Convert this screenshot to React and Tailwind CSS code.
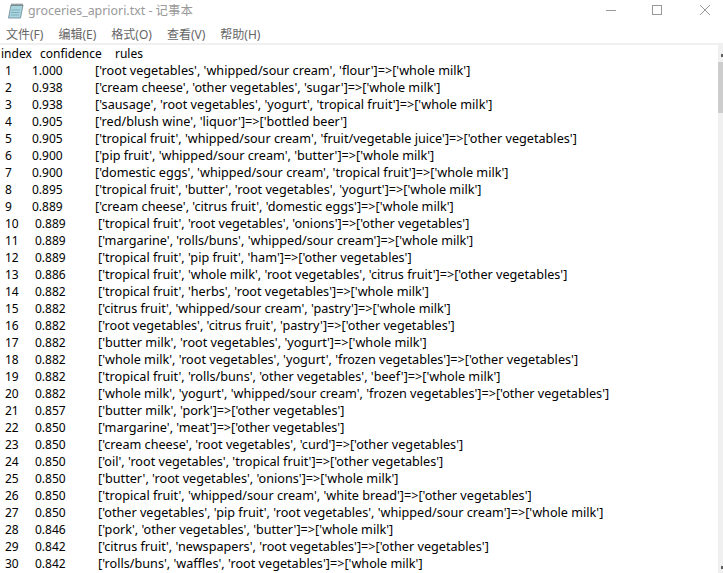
const rows = [
["1","1.000","['root vegetables', 'whipped/sour cream', 'flour']=>['whole milk']"],
["2","0.938","['cream cheese', 'other vegetables', 'sugar']=>['whole milk']"],
["3","0.938","['sausage', 'root vegetables', 'yogurt', 'tropical fruit']=>['whole milk']"],
["4","0.905","['red/blush wine', 'liquor']=>['bottled beer']"],
["5","0.905","['tropical fruit', 'whipped/sour cream', 'fruit/vegetable juice']=>['other vegetables']"],
["6","0.900","['pip fruit', 'whipped/sour cream', 'butter']=>['whole milk']"],
["7","0.900","['domestic eggs', 'whipped/sour cream', 'tropical fruit']=>['whole milk']"],
["8","0.895","['tropical fruit', 'butter', 'root vegetables', 'yogurt']=>['whole milk']"],
["9","0.889","['cream cheese', 'citrus fruit', 'domestic eggs']=>['whole milk']"],
["10","0.889","['tropical fruit', 'root vegetables', 'onions']=>['other vegetables']"],
["11","0.889","['margarine', 'rolls/buns', 'whipped/sour cream']=>['whole milk']"],
["12","0.889","['tropical fruit', 'pip fruit', 'ham']=>['other vegetables']"],
["13","0.886","['tropical fruit', 'whole milk', 'root vegetables', 'citrus fruit']=>['other vegetables']"],
["14","0.882","['tropical fruit', 'herbs', 'root vegetables']=>['whole milk']"],
["15","0.882","['citrus fruit', 'whipped/sour cream', 'pastry']=>['whole milk']"],
["16","0.882","['root vegetables', 'citrus fruit', 'pastry']=>['other vegetables']"],
["17","0.882","['butter milk', 'root vegetables', 'yogurt']=>['whole milk']"],
["18","0.882","['whole milk', 'root vegetables', 'yogurt', 'frozen vegetables']=>['other vegetables']"],
["19","0.882","['tropical fruit', 'rolls/buns', 'other vegetables', 'beef']=>['whole milk']"],
["20","0.882","['whole milk', 'yogurt', 'whipped/sour cream', 'frozen vegetables']=>['other vegetables']"],
["21","0.857","['butter milk', 'pork']=>['other vegetables']"],
["22","0.850","['margarine', 'meat']=>['other vegetables']"],
["23","0.850","['cream cheese', 'root vegetables', 'curd']=>['other vegetables']"],
["24","0.850","['oil', 'root vegetables', 'tropical fruit']=>['other vegetables']"],
["25","0.850","['butter', 'root vegetables', 'onions']=>['whole milk']"],
["26","0.850","['tropical fruit', 'whipped/sour cream', 'white bread']=>['other vegetables']"],
["27","0.850","['other vegetables', 'pip fruit', 'root vegetables', 'whipped/sour cream']=>['whole milk']"],
["28","0.846","['pork', 'other vegetables', 'butter']=>['whole milk']"],
["29","0.842","['citrus fruit', 'newspapers', 'root vegetables']=>['other vegetables']"],
["30","0.842","['rolls/buns', 'waffles', 'root vegetables']=>['whole milk']"],
];
const font = "font-['Noto_Sans','Noto_Sans_CJK_SC',sans-serif]";
const menu = ["文件(F)","编辑(E)","格式(O)","查看(V)","帮助(H)"];
export default function App() {
  return (
    <div className={`w-[723px] h-[573px] bg-white overflow-hidden flex flex-col ${font}`}>
      <div className="h-[20px] flex items-center shrink-0 pt-[2px]">
        <svg width="17" height="17" viewBox="0 0 17 17" className="ml-[7px] -mt-[2px]">
          <path d="M4 3 L16 3 L13.500 16 L1.500 16 Z" fill="#a9d3dd" stroke="#7d9aa5" />
          <path d="M4.500 8 L13 8 M4 10.500 L12.500 10.500 M3.500 13 L12 13" stroke="#7fb0bd" />
          <path d="M5 1.500V4M7 1.500V4M9 1.500V4M11 1.500V4M13 1.500V4M15 1.500V4" stroke="#555" strokeWidth="0.800" />
        </svg>
        <span className="ml-[4px] text-[12.4px] text-[#999999]">groceries_apriori.txt - 记事本</span>
        <div className="ml-auto flex items-center -mt-[2px]">
          <svg width="12" height="12" viewBox="0 0 12 12" className="mr-[34px]"><path d="M1 6.500H11" stroke="#999" /></svg>
          <svg width="12" height="12" viewBox="0 0 12 12" className="mr-[36px]"><rect x="1.500" y="1.500" width="9" height="9" fill="none" stroke="#999" /></svg>
          <svg width="12" height="12" viewBox="0 0 12 12" className="mr-[12px]"><path d="M1 1L11 11M11 1L1 11" stroke="#999" /></svg>
        </div>
      </div>
      <div className="h-[23px] pt-[6px] flex items-center gap-[15px] pl-[6px] text-[12px] text-[#666666] shrink-0">
        {menu.map((m) => <span key={m}>{m}</span>)}
      </div>
      <div className="h-[2px] bg-[#f0f0f0] shrink-0" />
      <div className="flex flex-1 min-h-0">
        <div className="flex-1 min-w-0 text-[12px] leading-[17px] text-black whitespace-nowrap">
          <div className="flex h-[17px]">
            <span className="w-[40px] pl-[1px]">index</span>
            <span className="w-[75px]">confidence</span>
            <span>rules</span>
          </div>
          {rows.map(([i, c, r]) => (
            <div key={i} className="flex h-[17px]">
              <span className={i.length > 1 ? "w-[35px] pl-[5px]" : "w-[32px] pl-[5px]"}>{i}</span>
              <span className="w-[63px]">{c}</span>
              <span className="text-[12.65px]">{r}</span>
            </div>
          ))}
        </div>
        <div className="w-[5px] bg-[#f0f0f0] flex flex-col shrink-0 relative">
          <div className="h-[17px]" />
          <div className="h-[51px] bg-[#cdcdcd]" />
          <div className="absolute right-0 top-[9px] w-[2px] h-[3px] bg-[#606060]" />
          <div className="absolute right-0 bottom-[4px] w-[2px] h-[3px] bg-[#606060]" />
        </div>
      </div>
    </div>
  );
}
